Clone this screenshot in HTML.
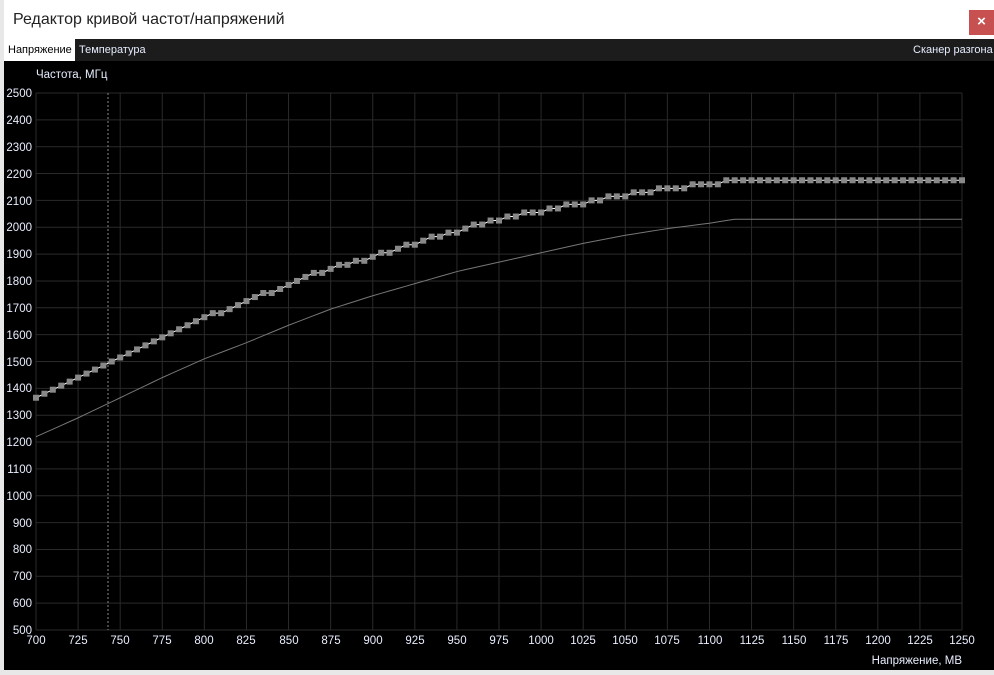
<!DOCTYPE html>
<html><head><meta charset="utf-8"><style>
body{margin:0;width:994px;height:675px;overflow:hidden;background:#e8e8e8;font-family:"Liberation Sans",sans-serif;position:relative}
#win{position:absolute;left:4px;top:0;width:990px;height:670px;background:#000}
#title{position:absolute;left:0;top:0;width:990px;height:39px;background:#fff}
#title span{position:absolute;left:9px;top:11px;font-size:16px;color:#222}
#close{position:absolute;left:965px;top:10px;width:25px;height:25px;background:#c75050;color:#fff;font-size:15px;font-weight:bold;text-align:center;line-height:24px}
#tabs{position:absolute;left:0;top:39px;width:990px;height:22px;background:#1c1c1c;font-size:11px;color:#e6ecff}
.t{position:absolute;top:5px}
#tab1{position:absolute;left:0;top:0;width:71px;height:22px;background:#fff;color:#000}
svg{position:absolute;left:0;top:0}
text{font-family:"Liberation Sans",sans-serif;font-size:11.5px;fill:#e8eeff}
</style></head><body>
<div id="win">
<div id="title"><span>Редактор кривой частот/напряжений</span><div id="close">×</div></div>
<div id="tabs"><div id="tab1"><span class="t" style="left:4px">Напряжение</span></div><span class="t" style="left:75px">Температура</span><span class="t" style="left:909px">Сканер разгона</span></div>
</div>
<svg id="s" width="994" height="675" xmlns="http://www.w3.org/2000/svg">
<text x="36" y="78">Частота, МГц</text>
<text x="962" y="664" text-anchor="end">Напряжение, МВ</text>
<g id="yl" text-anchor="end">
<text x="32" y="97">2500</text><text x="32" y="124">2400</text><text x="32" y="151">2300</text><text x="32" y="178">2200</text><text x="32" y="205">2100</text><text x="32" y="231">2000</text><text x="32" y="258">1900</text><text x="32" y="285">1800</text><text x="32" y="312">1700</text><text x="32" y="339">1600</text><text x="32" y="366">1500</text><text x="32" y="392">1400</text><text x="32" y="419">1300</text><text x="32" y="446">1200</text><text x="32" y="473">1100</text><text x="32" y="500">1000</text><text x="32" y="527">900</text><text x="32" y="553">800</text><text x="32" y="580">700</text><text x="32" y="607">600</text><text x="32" y="634">500</text>
</g>
<g text-anchor="middle">
<text x="36" y="644">700</text><text x="78" y="644">725</text><text x="120" y="644">750</text><text x="162" y="644">775</text><text x="204" y="644">800</text><text x="246" y="644">825</text><text x="289" y="644">850</text><text x="331" y="644">875</text><text x="373" y="644">900</text><text x="415" y="644">925</text><text x="457" y="644">950</text><text x="499" y="644">975</text><text x="541" y="644">1000</text><text x="583" y="644">1025</text><text x="625" y="644">1050</text><text x="667" y="644">1075</text><text x="710" y="644">1100</text><text x="752" y="644">1125</text><text x="794" y="644">1150</text><text x="836" y="644">1175</text><text x="878" y="644">1200</text><text x="920" y="644">1225</text><text x="962" y="644">1250</text>
</g>
<g id="g"></g>
</svg>
<script>
var ns="http://www.w3.org/2000/svg",g=document.getElementById('g');
function el(n,a){var e=document.createElementNS(ns,n);for(var k in a)e.setAttribute(k,a[k]);g.appendChild(e);return e}
function X(v){return 36+(v-700)*926/550}function Y(f){return 630-(f-500)*537/2000}
for(var f=500;f<=2500;f+=100)el('line',{x1:36,x2:962,y1:Y(f),y2:Y(f),stroke:'#2a2a2a'});
for(var v=700;v<=1250;v+=25)el('line',{x1:X(v),x2:X(v),y1:93,y2:630,stroke:'#2a2a2a'});
el('line',{x1:108,x2:108,y1:93,y2:630,stroke:'#888','stroke-dasharray':'2,2'});
function interp(k,v){for(var i=0;i<k.length-1;i++){if(v<=k[i+1][0]){var t=(v-k[i][0])/(k[i+1][0]-k[i][0]);return k[i][1]+t*(k[i+1][1]-k[i][1])}}return k[k.length-1][1]}
var U=[[700,1365],[725,1440],[750,1510],[775,1590],[800,1660],[825,1725],[850,1785],[875,1850],[900,1890],[925,1940],[950,1985],[975,2030],[1000,2060],[1025,2090],[1050,2120],[1075,2145],[1100,2160],[1115,2175],[1250,2175]];
var L=[[700,1220],[725,1290],[750,1365],[775,1440],[800,1510],[825,1570],[850,1635],[875,1695],[900,1745],[925,1790],[950,1835],[975,1870],[1000,1905],[1025,1940],[1050,1970],[1075,1995],[1100,2015],[1115,2030],[1250,2030]];
var pu=[],pl=[];
for(var v=700;v<=1250;v+=5){var fu=Math.round(interp(U,v)/15)*15,fl=interp(L,v);pu.push(X(v)+','+Y(fu));pl.push(X(v)+','+Y(fl));}
el('polyline',{points:pl.join(' '),fill:'none',stroke:'#777','stroke-width':1});
el('polyline',{points:pu.join(' '),fill:'none',stroke:'#fff','stroke-width':1});
pu.forEach(function(p){var a=p.split(',');el('rect',{x:a[0]-3,y:a[1]-3,width:6,height:6,fill:'#888'})});
</script>
</body></html>
